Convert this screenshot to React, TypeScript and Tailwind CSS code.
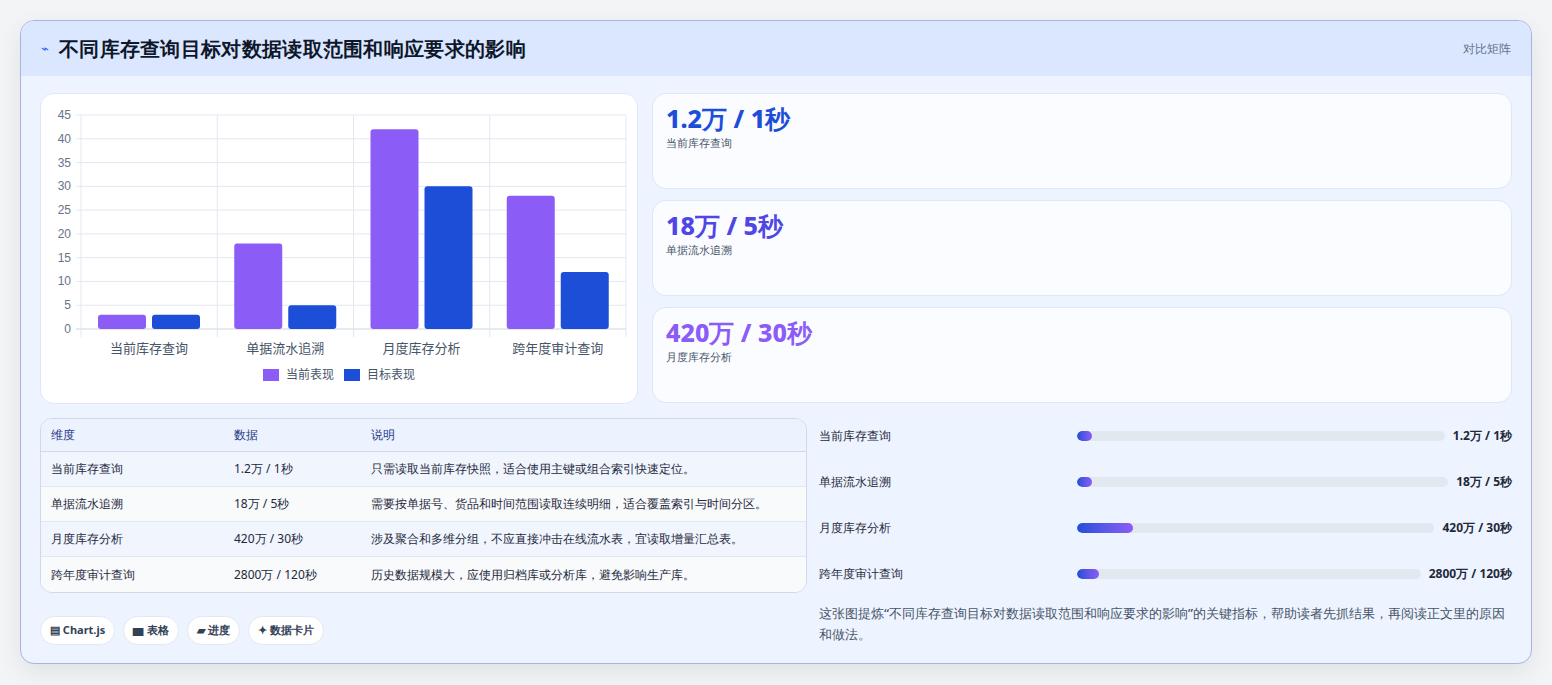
import React from "react";

const cats = ["当前库存查询", "单据流水追溯", "月度库存分析", "跨年度审计查询"];
const cur = [3, 18, 42, 28];
const tgt = [3, 5, 30, 12];

function Chart() {
  const x0 = 40, x1 = 585, y0 = 235, h = 214;
  const cw = (x1 - x0) / 4;
  const sy = (v: number) => y0 - (v / 45) * h;
  return (
    <svg width="597" height="310" className="block">
      {[0, 5, 10, 15, 20, 25, 30, 35, 40, 45].map((v) => (
        <g key={v}>
          <line x1={x0 - 5} x2={x1} y1={sy(v)} y2={sy(v)} stroke={v === 0 ? "#cbd5e1" : "#e2e8f0"} />
          <text x={x0 - 10} y={sy(v) + 4} textAnchor="end" fontSize="12" fill="#64748b" fontFamily="Liberation Sans, sans-serif">{v}</text>
        </g>
      ))}
      {[0, 1, 2, 3, 4].map((i) => (
        <line key={i} x1={x0 + i * cw} x2={x0 + i * cw} y1={sy(45)} y2={y0 + 8} stroke="#e2e8f0" />
      ))}
      {cats.map((c, i) => {
        const cx = x0 + i * cw;
        return (
          <g key={c}>
            <rect x={cx + 17} y={sy(cur[i])} width={48} height={y0 - sy(cur[i])} rx={3} fill="#8b5cf6" />
            <rect x={cx + 71} y={sy(tgt[i])} width={48} height={y0 - sy(tgt[i])} rx={3} fill="#1d4ed8" />
            <text x={cx + cw / 2} y={259} textAnchor="middle" fontSize="13" fill="#475569" fontFamily="Noto Sans CJK SC, sans-serif">{c}</text>
          </g>
        );
      })}
      <rect x={222} y={275} width={16} height={12} fill="#8b5cf6" />
      <text x={245} y={285} fontSize="12" fill="#475569" fontFamily="Noto Sans CJK SC, sans-serif">当前表现</text>
      <rect x={303} y={275} width={16} height={12} fill="#1d4ed8" />
      <text x={326} y={285} fontSize="12" fill="#475569" fontFamily="Noto Sans CJK SC, sans-serif">目标表现</text>
    </svg>
  );
}

const stats = [
  { v: "1.2万 / 1秒", l: "当前库存查询", c: "text-[#1d4ed8]" },
  { v: "18万 / 5秒", l: "单据流水追溯", c: "text-[#4f46e5]" },
  { v: "420万 / 30秒", l: "月度库存分析", c: "text-[#8b5cf6]" },
];

const rows = [
  ["当前库存查询", "1.2万 / 1秒", "只需读取当前库存快照，适合使用主键或组合索引快速定位。"],
  ["单据流水追溯", "18万 / 5秒", "需要按单据号、货品和时间范围读取连续明细，适合覆盖索引与时间分区。"],
  ["月度库存分析", "420万 / 30秒", "涉及聚合和多维分组，不应直接冲击在线流水表，宜读取增量汇总表。"],
  ["跨年度审计查询", "2800万 / 120秒", "历史数据规模大，应使用归档库或分析库，避免影响生产库。"],
];

const prog = [
  { l: "当前库存查询", v: "1.2万 / 1秒", w: 15 },
  { l: "单据流水追溯", v: "18万 / 5秒", w: 15 },
  { l: "月度库存分析", v: "420万 / 30秒", w: 56 },
  { l: "跨年度审计查询", v: "2800万 / 120秒", w: 22 },
];

export default function App() {
  return (
    <div className="w-[1552px] h-[685px] bg-[#f3f4f6] pt-[20px] pl-[20px] font-['Noto_Sans_CJK_SC',sans-serif]">
      <div className="w-[1512px] h-[644px] rounded-[14px] border border-[#a5b4e8] bg-[#eef4ff] overflow-hidden shadow-[0_8px_24px_rgba(0,0,0,0.08)]">
        <div className="h-[55px] bg-[#dbe7ff] flex items-center justify-between pl-[20px] pr-[20px]">
          <div className="flex items-center gap-[10px]">
            <span className="text-[#2563eb] text-[13px]">⌁</span>
            <span className="text-[20px] font-bold text-[#0f172a] tracking-[0.3px]">不同库存查询目标对数据读取范围和响应要求的影响</span>
          </div>
          <span className="text-[12px] text-[#64748b]">对比矩阵</span>
        </div>
        <div className="px-[19px] pt-[17px]">
          <div className="flex gap-[14px]">
            <div className="w-[598px] h-[311px] bg-white rounded-[14px] border border-[#e0e8f7]">
              <Chart />
            </div>
            <div className="flex-1 flex flex-col gap-[11px]">
              {stats.map((s) => (
                <div key={s.l} className="h-[96px] rounded-[14px] border border-[#dde7f7] bg-[#fbfcff] px-[13px] pt-[8px]">
                  <div className={`text-[25px] font-extrabold leading-[32px] ${s.c}`}>{s.v}</div>
                  <div className="text-[11px] text-[#475569] mt-[1px]">{s.l}</div>
                </div>
              ))}
            </div>
          </div>
          <div className="flex gap-[12px] mt-[14px]">
            <div className="w-[767px]">
              <div className="rounded-[12px] border border-[#cfd9ea] overflow-hidden text-[12px] text-[#1e293b]">
                <div className="flex h-[33px] items-center bg-[#edf3fe] border-b border-[#cfd9ea] text-[#1e3a8a] font-medium">
                  <div className="w-[193px] pl-[10px]">维度</div>
                  <div className="w-[137px]">数据</div>
                  <div>说明</div>
                </div>
                {rows.map((r, i) => (
                  <div key={r[0]} className={`flex h-[35px] items-center ${i < 3 ? "border-b border-[#e2e8f0]" : ""} ${i % 2 === 0 ? "bg-[#f0f5fe]" : "bg-[#f8fafc]"}`}>
                    <div className="w-[193px] pl-[10px]">{r[0]}</div>
                    <div className="w-[137px]">{r[1]}</div>
                    <div>{r[2]}</div>
                  </div>
                ))}
              </div>
              <div className="flex gap-[8px] mt-[23px] text-[11px] font-bold text-[#334155]">
                {["▤ Chart.js", "▆ 表格", "▰ 进度", "✦ 数据卡片"].map((t) => (
                  <span key={t} className="h-[29px] px-[9px] flex items-center rounded-full bg-white border border-[#e2e8f0]">{t}</span>
                ))}
              </div>
            </div>
            <div className="flex-1 -mt-[5px]">
              <div className="flex flex-col">
                {prog.map((p) => (
                  <div key={p.l} className="h-[46px] flex items-center text-[12px] text-[#1e293b] font-medium">
                    <div className="w-[258px] shrink-0">{p.l}</div>
                    <div className="flex-1 h-[10px] rounded-full bg-[#e2e8f0] overflow-hidden">
                      <div className="h-full rounded-full bg-gradient-to-r from-[#1d4ed8] to-[#8b5cf6]" style={{ width: p.w }} />
                    </div>
                    <div className="ml-[8px] font-bold text-[#1e293b]">{p.v}</div>
                  </div>
                ))}
              </div>
              <p className="mt-[6px] text-[13px] leading-[21px] text-[#475569] font-medium">
                这张图提炼“不同库存查询目标对数据读取范围和响应要求的影响”的关键指标，帮助读者先抓结果，再阅读正文里的原因和做法。
              </p>
            </div>
          </div>
        </div>
      </div>
    </div>
  );
}
